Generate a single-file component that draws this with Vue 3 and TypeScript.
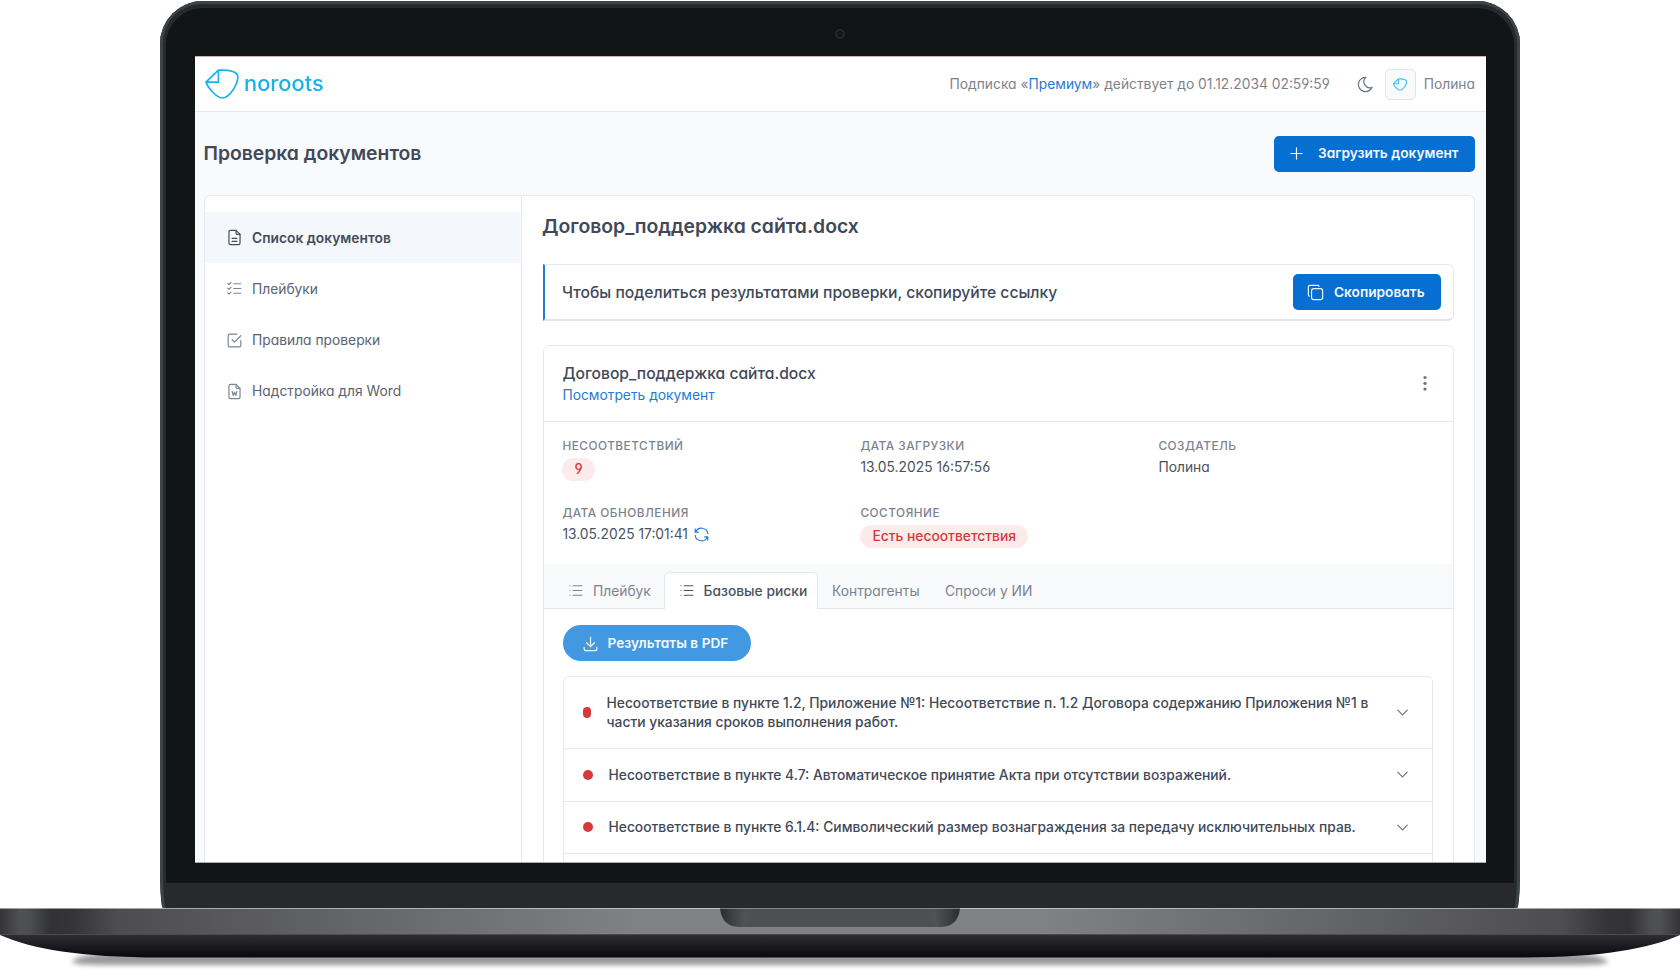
<script setup lang="ts">
interface MenuItem { label: string; icon: string; active?: boolean }
interface Risk { text: string; tall?: boolean }

const menu: MenuItem[] = [
  { label: 'Список документов', icon: 'doc', active: true },
  { label: 'Плейбуки', icon: 'checks' },
  { label: 'Правила проверки', icon: 'box' },
  { label: 'Надстройка для Word', icon: 'word' },
]

const risks: Risk[] = [
  { text: 'Несоответствие в пункте 1.2, Приложение №1: Несоответствие п. 1.2 Договора содержанию Приложения №1 в части указания сроков выполнения работ.', tall: true },
  { text: 'Несоответствие в пункте 4.7: Автоматическое принятие Акта при отсутствии возражений.' },
  { text: 'Несоответствие в пункте 6.1.4: Символический размер вознаграждения за передачу исключительных прав.' },
]
</script>

<template>
  <div class="scene">
    <div class="lid">
      <div class="bezel">
        <span class="camera"></span>
        <div class="screen">
          <header class="topbar">
            <div class="logo">
              <svg class="logo-mark" viewBox="0 0 34 30" width="34" height="30">
                <path d="M13.4 1.2H18Q29 1.4 32.2 5.4C34 8.5 31.500 16 28 21C24.500 26.200 20.500 29 17.200 29C13.500 29 11 26.500 7.500 23C4.500 20 2 16.500 1 13.100Z M13.4 1.2V13.100H1" />
              </svg>
              <span class="logo-text">noroots</span>
            </div>
            <div class="account">
              <span class="plan">Подписка «<a>Премиум</a>» действует до 01.12.2034 02:59:59</span>
              <svg class="ico moon" viewBox="0 0 24 24"><path d="M12 3c.132 0 .263 0 .393 0a7.500 7.500 0 0 0 7.920 12.446a9 9 0 1 1 -8.313 -12.454z" /></svg>
              <span class="avatar">
                <svg viewBox="0 0 34 30" width="14" height="13"><path d="M13.4 1.2H18Q29 1.4 32.2 5.4C34 8.5 31.500 16 28 21C24.500 26.200 20.500 29 17.200 29C13.500 29 11 26.500 7.500 23C4.500 20 2 16.500 1 13.100Z M13.4 1.2V13.100H1" /></svg>
              </span>
              <span class="user">Полина</span>
            </div>
          </header>

          <div class="page-head">
            <h1>Проверка документов</h1>
            <button class="btn upload">
              <svg class="ico" viewBox="0 0 24 24"><path d="M12 5v14M5 12h14" /></svg>
              <span>Загрузить документ</span>
            </button>
          </div>

          <div class="panel">
            <nav class="side">
              <div v-for="m in menu" :key="m.label" class="side-item" :class="{ active: m.active }">
                <svg class="ico" viewBox="0 0 24 24">
                  <template v-if="m.icon === 'doc' || m.icon === 'word'">
                    <path d="M14 3v4a1 1 0 0 0 1 1h4" />
                    <path d="M17 21h-10a2 2 0 0 1 -2 -2v-14a2 2 0 0 1 2 -2h7l5 5v11a2 2 0 0 1 -2 2z" />
                    <path v-if="m.icon === 'doc'" d="M9 13h6M9 17h6" />
                    <path v-else d="M9 12l1.333 5l1.667 -4l1.667 4l1.333 -5" />
                  </template>
                  <path v-else-if="m.icon === 'checks'" d="M3.500 5.500l1.500 1.500l2.500 -2.500M3.500 11.500l1.500 1.500l2.500 -2.500M3.500 17.500l1.500 1.500l2.500 -2.500M11 6h9M11 12h9M11 18h9" />
                  <path v-else d="M9 11l3 3l8 -8M20 12v6a2 2 0 0 1 -2 2h-12a2 2 0 0 1 -2 -2v-12a2 2 0 0 1 2 -2h9" />
                </svg>
                <span>{{ m.label }}</span>
              </div>
            </nav>

            <main class="main">
              <h2>Договор_поддержка сайта.docx</h2>

              <div class="share">
                <span class="share-text">Чтобы поделиться результатами проверки, скопируйте ссылку</span>
                <button class="btn copy">
                  <svg class="ico" viewBox="0 0 24 24"><path d="M7 9.667a2.667 2.667 0 0 1 2.667 -2.667h8.666a2.667 2.667 0 0 1 2.667 2.667v8.666a2.667 2.667 0 0 1 -2.667 2.667h-8.666a2.667 2.667 0 0 1 -2.667 -2.667z" /><path d="M4.012 16.737a2 2 0 0 1 -1.012 -1.737v-10c0 -1.100 .9 -2 2 -2h10c.75 0 1.158 .385 1.500 1" /></svg>
                  <span>Скопировать</span>
                </button>
              </div>

              <section class="card">
                <div class="card-head">
                  <div class="doc">
                    <div class="doc-name">Договор_поддержка сайта.docx</div>
                    <a class="doc-link">Посмотреть документ</a>
                  </div>
                  <svg class="dots" viewBox="0 0 6 18" width="6" height="18"><circle cx="3" cy="2.500" r="1.600" /><circle cx="3" cy="8.300" r="1.600" /><circle cx="3" cy="14.100" r="1.600" /></svg>
                </div>

                <div class="facts">
                  <div class="fact"><div class="cap">Несоответствий</div><span class="pill count">9</span></div>
                  <div class="fact"><div class="cap">Дата загрузки</div><div class="val">13.05.2025 16:57:56</div></div>
                  <div class="fact"><div class="cap">Создатель</div><div class="val">Полина</div></div>
                  <div class="fact">
                    <div class="cap">Дата обновления</div>
                    <div class="val">13.05.2025 17:01:41
                      <svg class="ico refresh" viewBox="0 0 24 24"><path d="M20 11a8.100 8.100 0 0 0 -15.500 -2m-.5 -4v4h4M4 13a8.100 8.100 0 0 0 15.500 2m.5 4v-4h-4" /></svg>
                    </div>
                  </div>
                  <div class="fact"><div class="cap">Состояние</div><span class="pill">Есть несоответствия</span></div>
                </div>

                <div class="tabs">
                  <div class="tab first"><svg class="ico" viewBox="0 0 24 24"><path d="M9 6h11M9 12h11M9 18h11M5 6v.01M5 12v.01M5 18v.01" /></svg><span>Плейбук</span></div>
                  <div class="tab on"><svg class="ico" viewBox="0 0 24 24"><path d="M9 6h11M9 12h11M9 18h11M5 6v.01M5 12v.01M5 18v.01" /></svg><span>Базовые риски</span></div>
                  <div class="tab third"><span>Контрагенты</span></div>
                  <div class="tab"><span>Спроси у ИИ</span></div>
                </div>

                <div class="card-body">
                  <button class="btn pdf">
                    <svg class="ico" viewBox="0 0 24 24"><path d="M4 17v2a2 2 0 0 0 2 2h12a2 2 0 0 0 2 -2v-2M7 11l5 5l5 -5M12 4v12" /></svg>
                    <span>Результаты в PDF</span>
                  </button>
                  <div class="risks">
                    <div v-for="r in risks" :key="r.text" class="risk" :class="{ tall: r.tall }">
                      <span class="dot"></span>
                      <span class="risk-text">{{ r.text }}</span>
                      <svg class="ico" viewBox="0 0 24 24"><path d="M6 9l6 6l6 -6" /></svg>
                    </div>
                    <div class="risk"></div>
                  </div>
                </div>
              </section>
            </main>
          </div>
        </div>
      </div>
    </div>

    <svg class="base" viewBox="0 0 1680 64" width="1680" height="64">
      <defs>
        <linearGradient id="deck" x1="0" x2="1" y1="0" y2="0">
          <stop offset="0" stop-color="#343438" />
          <stop offset="0.012" stop-color="#505155" />
          <stop offset="0.018" stop-color="#4c4d51" />
          <stop offset="0.030" stop-color="#323236" />
          <stop offset="0.044" stop-color="#353539" />
          <stop offset="0.070" stop-color="#4d4d51" />
          <stop offset="0.250" stop-color="#6b6c70" />
          <stop offset="0.380" stop-color="#808185" />
          <stop offset="0.620" stop-color="#808185" />
          <stop offset="0.750" stop-color="#6b6c70" />
          <stop offset="0.930" stop-color="#4d4d51" />
          <stop offset="0.956" stop-color="#353539" />
          <stop offset="0.970" stop-color="#323236" />
          <stop offset="0.982" stop-color="#4c4d51" />
          <stop offset="0.988" stop-color="#505155" />
          <stop offset="1" stop-color="#343438" />
        </linearGradient>
        <linearGradient id="under" x1="0" x2="0" y1="0" y2="1">
          <stop offset="0" stop-color="#2d2d32" />
          <stop offset="1" stop-color="#08080c" />
        </linearGradient>
        <linearGradient id="notch" x1="0" x2="1" y1="0" y2="0">
          <stop offset="0" stop-color="#2c2d30" />
          <stop offset="0.100" stop-color="#505155" />
          <stop offset="0.150" stop-color="#4e4f53" />
          <stop offset="0.850" stop-color="#4e4f53" />
          <stop offset="0.900" stop-color="#505155" />
          <stop offset="1" stop-color="#2c2d30" />
        </linearGradient>
        <filter id="soft" x="-5%" y="-100%" width="110%" height="300%"><feGaussianBlur stdDeviation="3 2.800" /></filter>
      </defs>
      <path d="M73 55Q72 47 110 45H1570Q1608 47 1607 55Q1600 57 1570 57H110Q80 57 73 55Z" fill="#000" opacity="0.400" filter="url(#soft)" />
      <path d="M0 27H1680C1648 41 1600 49.500 1520 49.500H160C80 49.500 32 41 0 27Z" fill="url(#under)" />
      <rect x="0" y="0.500" width="1680" height="26.500" fill="url(#deck)" />
      <rect x="0" y="26" width="1680" height="1" fill="#4b4c50" />
      <path d="M720 0.500H960Q958 18.500 941 19H739Q722 18.500 720 0.500Z" fill="url(#notch)" />
    </svg>
  </div>
</template>

<style>
html, body { background: #fff; overflow: hidden; }
</style>

<style scoped>
* { box-sizing: border-box; }
.scene {
  width: 1680px; height: 972px; overflow: hidden; background: #fff;
  font-family: Inter, "Noto Sans", sans-serif; font-size: 13.820px; line-height: 19.700px;
  font-feature-settings: "cv03", "cv04", "cv11"; color: #414958;
}
h1, h2 { margin: 0; font-size: 19.330px; line-height: 28px; font-weight: 600; }
h2 { margin-left: -1px; }
h1 { margin: -1px 0 0 -0.500px; }
a { color: #1f7bd6; }
.ico { width: 19px; height: 19px; flex: none; fill: none; stroke: currentColor; stroke-width: 1.5; stroke-linecap: round; stroke-linejoin: round; }

.lid { width: 1360px; height: 907px; margin: 1px 0 0 160px; padding: 7px 6px 0; border-radius: 43px 43px 3px 3px / 43px 43px 40px 40px; background: #262a2d; box-shadow: inset 3px 0 #3c4446, inset -3px 0 #3c4446, inset 0 3px #3c4446; }
.bezel { position: relative; height: 875px; padding: 48px 28px 0 29px; border-radius: 37px 37px 0 0; background: #111516; }
.camera { position: absolute; left: 669px; top: 21px; width: 10px; height: 10px; border-radius: 50%; background: #111516; border: 2px solid #242829; }
.screen { width: 1291px; height: 807px; overflow: hidden; background: #f9fafc; border-top: 1px solid #c8b3b1; border-bottom: 1px solid #a9acad; }

.topbar { height: 55px; padding: 0 11px 0 10px; display: flex; align-items: center; justify-content: space-between; background: #fff; border-bottom: 1px solid #e6e8eb; }
.logo { display: flex; align-items: center; gap: 5px; }
.logo-mark { fill: none; stroke: #19b3ea; stroke-width: 1.7; stroke-linejoin: round; }
.logo-text { font-size: 20.500px; line-height: 28px; color: #19b3ea; font-weight: 450; transform: scaleX(1.065); transform-origin: left center; }
.account { padding-top: 1px; display: flex; align-items: center; color: #7c838e; }
.plan, .user { padding-top: 1px; }
.moon { margin-left: 26px; color: #667080; }
.avatar { width: 31px; height: 31px; margin: 0 8px 0 10px; display: flex; align-items: center; justify-content: center; border: 1px solid #e1e5ea; border-radius: 5px; background: #f8fafc; }
.avatar svg { fill: none; stroke: #3fc4ef; stroke-width: 2.8; stroke-linejoin: round; }

.btn { display: flex; align-items: center; border: 0; border-radius: 5px; background: #066fd1; color: #f3f8fd; font: inherit; font-size: 13.700px; font-weight: 600; font-feature-settings: inherit; white-space: nowrap; }
.btn span, .side-item span, .tab span { padding-top: 1.500px; }
.page-head { height: 83px; padding: 0 11px 0 9px; display: flex; align-items: center; justify-content: space-between; }
.upload { width: 201px; height: 36px; padding: 0 0 0 13px; gap: 12px; }

.panel { height: 720px; margin: 0 11px 0 9px; display: flex; background: #fff; border: 1px solid #e7e9ee; border-radius: 6px 6px 0 0; }
.side { width: 317px; padding-top: 16px; border-right: 1px solid #e7e9ee; }
.side-item { height: 51.3px; padding-left: 20px; display: flex; align-items: center; gap: 8px; color: #5a6373; }
.side-item .ico { color: #7d8592; }
.side-item.active { background: #f4f8fd; font-weight: 600; color: #444c5b; }
.side-item.active .ico { color: #444c5b; }

.main { width: 952px; padding: 16px 20px 0 21px; }
.share { height: 57px; margin-top: 24px; padding: 0 12px 0 17px; display: flex; align-items: center; justify-content: space-between; border: 1px solid #e7e9ee; border-left: 2px solid #1f7bd6; border-bottom: 2px solid #e0e5eb; border-radius: 0 6px 6px 0; font-size: 15.680px; font-weight: 500; }
.share-text { padding-top: 1.500px; }
.copy { width: 148px; height: 36px; padding-left: 13px; gap: 9px; }
.card { margin-top: 24px; height: 560px; border: 1px solid #e7e9ee; border-radius: 6px; }
.card-head { height: 76px; padding: 0 25px 0 18.400px; display: flex; align-items: center; justify-content: space-between; border-bottom: 1px solid #e7e9ee; }
.doc { padding-top: 1px; }
.doc-name { font-size: 15.660px; line-height: 22px; font-weight: 500; }
.doc-link { display: block; line-height: 20px; }
.dots { fill: #6d7583; }
.facts { height: 142px; padding: 15.500px 0 0 18.400px; display: grid; grid-template-columns: 298px 298px 1fr; grid-template-rows: 67px 59px; }
.cap { font-size: 11.800px; line-height: 16px; letter-spacing: 0.5px; font-weight: 500; color: #7c838e; text-transform: uppercase; }
.val { margin-top: 3.500px; line-height: 20px; display: flex; align-items: center; gap: 4px; color: #4a5262; }
.pill { display: inline-block; height: 23px; margin-top: 4.500px; padding: 0 12px; border-radius: 12px; line-height: 23.500px; font-weight: 500; color: #d63939; background: #fbebeb; }
.refresh { color: #1f7bd6; }
.tabs { height: 45px; padding: 8px 0 0 13px; display: flex; background: #f8fafc; box-shadow: inset 0 -1px #e3e6ea; color: #7c838e; }
.tab { height: 37px; padding: 0 0 0 13px; display: flex; align-items: center; gap: 8px; border: 1px solid transparent; border-bottom: 0; white-space: nowrap; }
.tab .ico { margin-top: -1px; }
.tab.first { width: 106.500px; padding-left: 8px; }
.tab.on { width: 154.500px; padding-left: 12px; background: #fff; color: #4a5262; border-color: #e3e6ea; border-radius: 5px 5px 0 0; font-weight: 500; }
.tab.third { width: 113px; }
.card-body { padding: 16px 20px 0 19px; }
.pdf { width: 188px; height: 36px; margin-left: -0.500px; padding-left: 18px; gap: 8px; border-radius: 18px; background: #4299e1; }
.risks { margin-top: 15px; border: 1px solid #e7e9ee; border-radius: 6px; font-feature-settings: normal; font-weight: 500; }
.risk { height: 52.500px; padding: 0 20px 0 19px; display: flex; align-items: center; border-bottom: 1px solid #e7e9ee; }
.risk.tall { height: 72px; }
.dot { width: 10px; height: 10px; flex: none; border-radius: 50%; background: #d63939; }
.risk-text { width: 780px; margin: 0 13px 0 15.500px; padding-top: 1.500px; }
.tall .dot { width: 8px; height: 11px; border-radius: 4px; }
.risk .ico { margin-left: auto; color: #6d7583; }
.base { display: block; }
</style>
